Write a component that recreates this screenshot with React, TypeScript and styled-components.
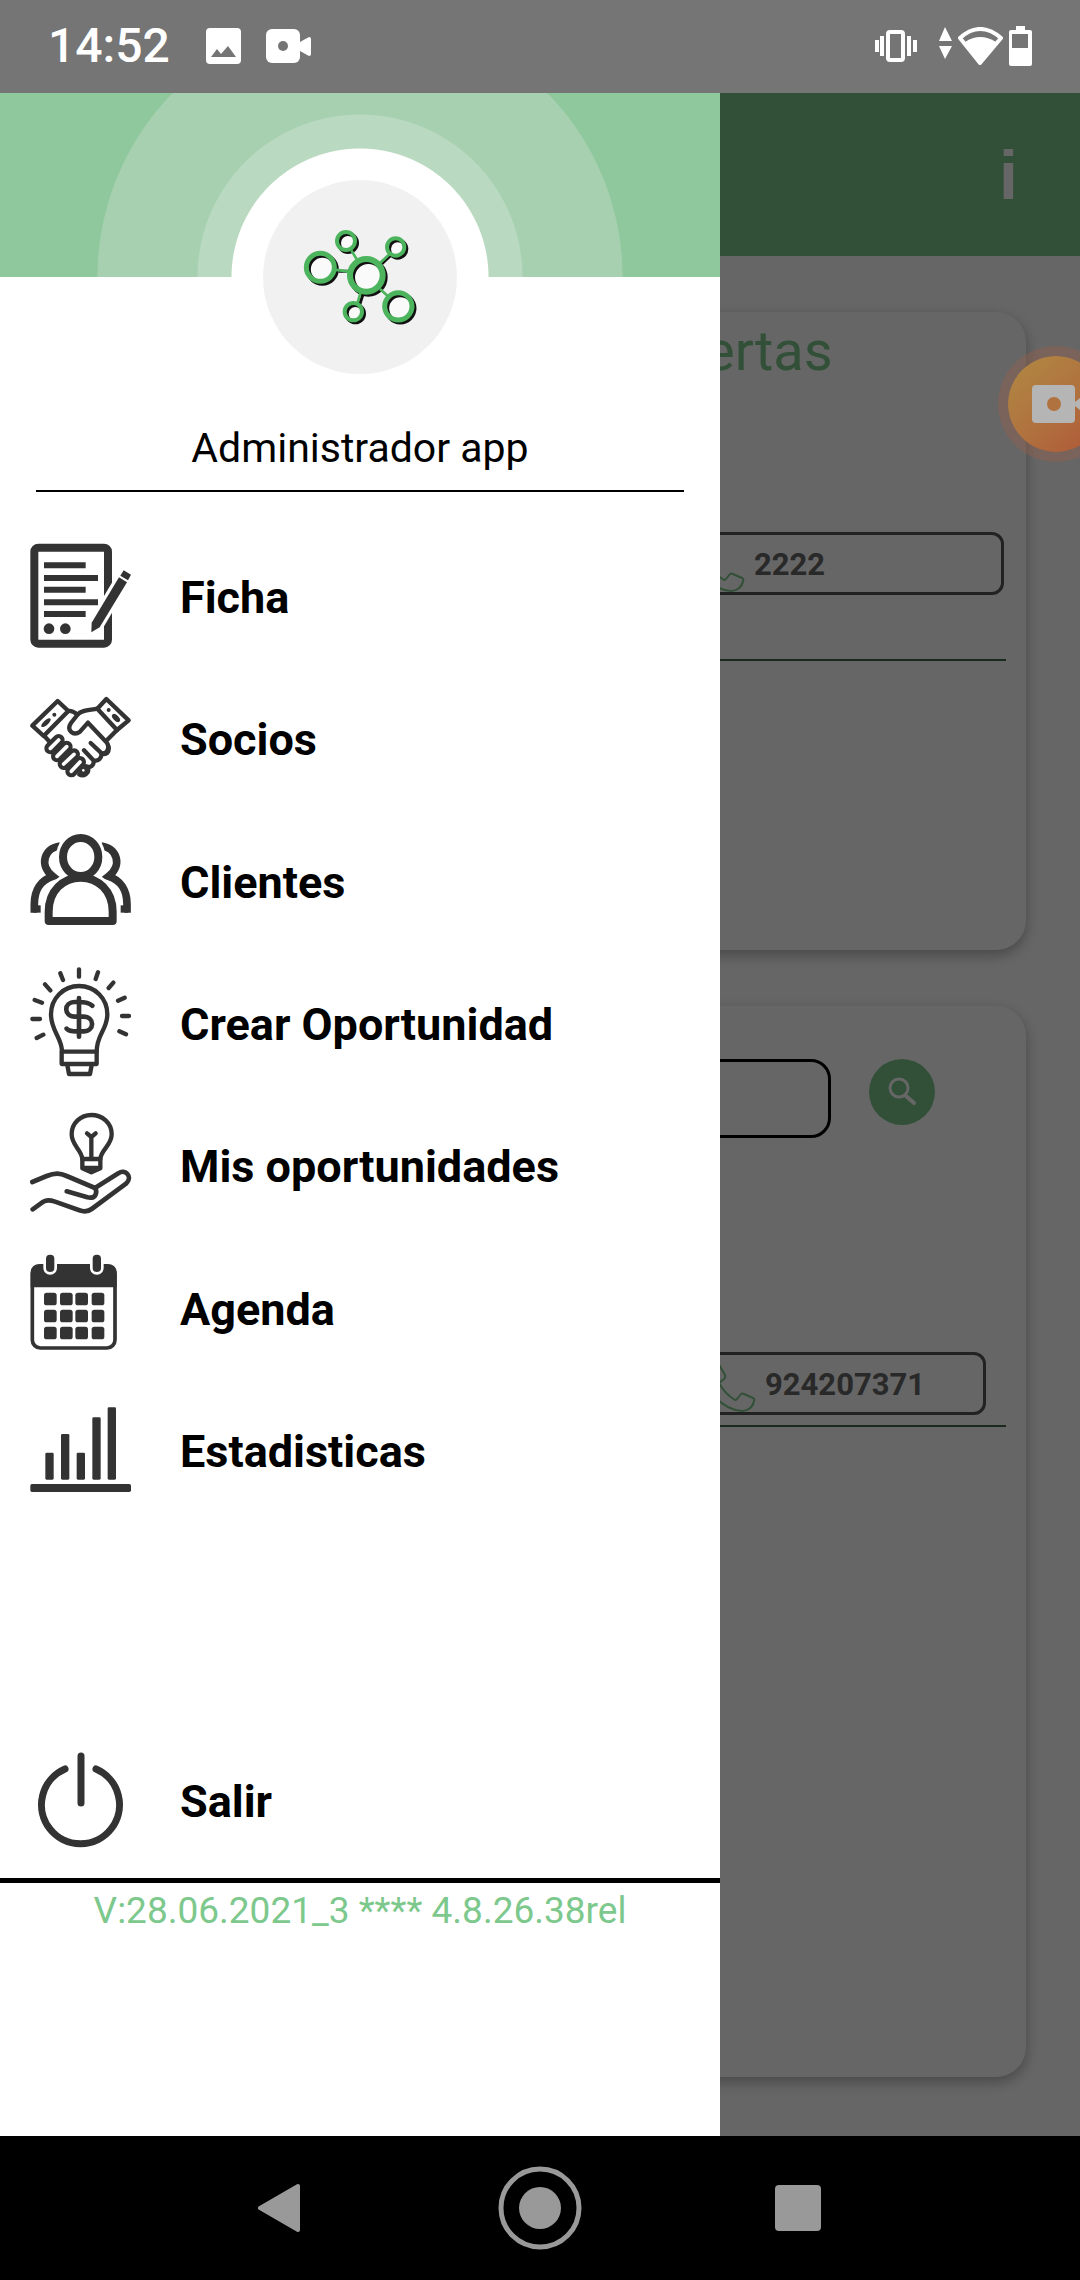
import React from "react";
import styled, { createGlobalStyle } from "styled-components";

const ink = "#333333";
const green = "#7dc88c";

const GlobalStyle = createGlobalStyle`
  *, *::before, *::after { box-sizing: border-box; }
  body { margin: 0; background: #ffffff; }
  body, button, input { font-family: Roboto, "Noto Sans", sans-serif; }
`;

const Screen = styled.div`
  display: flex;
  flex-direction: column;
  min-height: 100vh;
  overflow: hidden;
`;

/* ---------- system bars ---------- */

const StatusBar = styled.header`
  display: flex;
  align-items: center;
  height: 93px;
  padding: 0 48px 2px;
  background: #757575;
  color: #ffffff;
`;

const Clock = styled.time`
  margin-right: 36px;
  font-size: 48px;
  font-weight: 500;
  line-height: 56px;
`;

const StatusGroup = styled.div<{ $gap: number; $end?: boolean }>`
  display: flex;
  align-items: center;
  gap: ${(p) => p.$gap}px;
  margin-left: ${(p) => (p.$end ? "auto" : "0")};
`;

const NavBar = styled.footer`
  display: flex;
  justify-content: center;
  height: 144px;
  background: #000000;
`;

const NavButton = styled.button`
  display: grid;
  place-items: center;
  flex: 0 1 258px;
  padding: 0;
  border: 0;
  background: transparent;
`;

/* ---------- page under the drawer ---------- */

const Stage = styled.main`
  position: relative;
  display: flex;
  flex: 1;
  flex-direction: column;
  overflow: hidden;
  background: #ffffff;
`;

const AppBar = styled.div`
  display: flex;
  align-items: center;
  justify-content: flex-end;
  height: 163px;
  padding: 0 62px;
  background: ${green};
`;

const InfoButton = styled.button`
  padding: 0;
  border: 0;
  background: transparent;
  color: #ffffff;
  font-family: "Liberation Sans", Arial, sans-serif;
  font-size: 68px;
  font-weight: 700;
  line-height: 76px;
`;

const Cards = styled.div`
  display: flex;
  flex: 1;
  flex-direction: column;
  gap: 56px;
  padding: 56px 54px 59px;
`;

const Card = styled.section<{ $grow?: boolean }>`
  flex: ${(p) => (p.$grow ? "1" : "none")};
  min-height: 638px;
  padding: 6px 20px;
  border-radius: 30px;
  background: #ffffff;
  box-shadow: 0 5px 14px rgba(0, 0, 0, 0.3);
`;

const CardTitle = styled.h2`
  margin: 0;
  color: ${green};
  font-size: 56px;
  font-weight: 400;
  line-height: 66px;
  text-align: center;
`;

const ContactRow = styled.div<{ $top: number; $inset: number; $bottom: number }>`
  display: flex;
  justify-content: flex-end;
  padding: ${(p) => p.$top}px ${(p) => p.$inset}px ${(p) => p.$bottom}px;
  border-bottom: 2px solid #40684b;
`;

const PhoneLink = styled.a<{ $wide?: boolean }>`
  display: flex;
  align-items: center;
  gap: 8px;
  width: ${(p) => (p.$wide ? 324 : 295)}px;
  height: 63px;
  padding: 2px 7px 0;
  border: 3px solid #555555;
  border-radius: 12px;
  color: #666666;
  font-size: 31px;
  font-weight: 700;
  line-height: 38px;
  text-decoration: none;

  svg { flex: none; }
`;

const SearchRow = styled.form`
  display: flex;
  align-items: flex-start;
  gap: 38px;
  padding: 47px 71px 0;
`;

const SearchInput = styled.input`
  flex: 1;
  min-width: 0;
  height: 79px;
  padding: 0 20px;
  border: 3px solid #000000;
  border-radius: 20px;
  background: transparent;
  font-size: 31px;
`;

const SearchButton = styled.button`
  display: grid;
  place-items: center;
  width: 66px;
  height: 66px;
  padding: 0;
  border: 0;
  border-radius: 50%;
  background: ${green};
`;

const Scrim = styled.div`
  position: absolute;
  inset: 0;
  background: rgba(0, 0, 0, 0.6);
`;

const RecorderBubble = styled.button`
  position: absolute;
  top: 253px;
  right: -34px;
  width: 116px;
  height: 116px;
  padding: 0;
  border: 10px solid rgba(150, 95, 75, 0.4);
  border-radius: 50%;
  background: linear-gradient(140deg, #b08542 10%, #b0733f 50%, #b05c39 90%) padding-box;

  svg { display: block; }
`;

/* ---------- drawer ---------- */

const Drawer = styled.aside`
  position: absolute;
  top: 0;
  bottom: 0;
  left: 0;
  width: calc(100% * 2 / 3);
  background: #ffffff;
`;

const Hero = styled.div`
  height: 184px;
  background: radial-gradient(
    circle at 50% 100%,
    #ffffff 128px,
    #b9d9c0 129px,
    #b9d9c0 162px,
    #a6d0af 163px,
    #a6d0af 262px,
    #8fc89c 263px
  );
`;

const Avatar = styled.div`
  width: 194px;
  height: 194px;
  margin: -97px auto 0;
  border-radius: 50%;
  background: #f1f1f1;

  svg { display: block; }
`;

const UserName = styled.h1`
  margin: 50px 36px 32px;
  padding-bottom: 18px;
  border-bottom: 2px solid #000000;
  color: #000000;
  font-size: 41px;
  font-weight: 400;
  line-height: 48px;
  text-align: center;
`;

const Menu = styled.ul`
  display: flex;
  flex-direction: column;
  height: 996px;
  margin: 0;
  padding: 0;
  list-style: none;
`;

const MenuEntry = styled.li`
  display: flex;
  flex: 1;
`;

const MenuLink = styled.a`
  display: flex;
  flex: 1;
  align-items: center;
  gap: 48px;
  min-height: 142px;
  padding: 0 30px;
  color: #000000;
  text-decoration: none;
`;

const MenuLabel = styled.span`
  padding-top: 6px;
  font-size: 45px;
  font-weight: 700;
  line-height: 54px;
`;

const ExitArea = styled.div`
  display: flex;
  margin-top: 208px;
  padding-bottom: 8px;
  border-bottom: 5px solid #000000;
`;

const Version = styled.p`
  margin: 0;
  padding-top: 6px;
  color: ${green};
  font-size: 37px;
  line-height: 44px;
  text-align: center;
`;

/* ---------- drawings ---------- */

const MenuIcon = ({ box, children }: { box: string; children: React.ReactNode }) => (
  <svg
    width="102"
    height="110"
    viewBox={box}
    fill="none"
    stroke={ink}
    strokeLinecap="round"
    strokeLinejoin="round"
    aria-hidden="true"
  >
    {children}
  </svg>
);

const FormIcon = () => (
  <MenuIcon box="90 60 306 330">
    <rect x="103" y="83" width="221" height="288" rx="12" strokeWidth="24" />
    <g strokeWidth="18" strokeLinecap="butt">
      <path d="M132 136H257M132 174H294M132 209H257M132 247H294M132 282H257" />
    </g>
    <g fill={ink} stroke="none">
      <circle cx="147" cy="326" r="16" />
      <circle cx="196" cy="326" r="16" />
    </g>
    <path d="M275 310L370 151L392 164L300 320L275 337Z" fill="#fff" stroke="#fff" strokeWidth="20" />
    <path d="M275 308L357 172L381 187L299 322L274 337Z" fill={ink} stroke="none" />
    <path d="M371 151L393 164L384 181L361 167Z" fill={ink} stroke="none" />
  </MenuIcon>
);

const HandshakeIcon = () => (
  <MenuIcon box="90 489 306 330">
    <g strokeWidth="13">
      <path d="M97 620L173 546L205 576L131 651Z" />
      <path d="M319 540L386 604L351 633L292 569Z" />
      <path d="M205 576C216 574 224 580 232 586M134 652L152 672" />
      <path d="M292 569C270 574 245 572 232 588L213 612C198 634 220 652 240 638L264 611L318 668C332 684 322 706 305 703L272 672" />
      <path d="M351 633L322 662M326 684C328 700 320 708 305 704M305 704C304 718 296 728 280 724L252 694M280 724C284 738 272 748 258 742M262 744C272 762 250 774 238 766" />
    </g>
    <g strokeWidth="36">
      <path d="M151 688L176 663M171 712L200 683M191 735L222 706M214 757L240 729" />
    </g>
    <g strokeWidth="11" stroke="#fff">
      <path d="M151 688L176 663M171 712L200 683M191 735L222 706M214 757L240 729" />
    </g>
    <circle cx="250" cy="754" r="9" fill="#fff" strokeWidth="10" />
    <g fill={ink} stroke="none">
      <ellipse cx="138" cy="611" rx="18" ry="7" transform="rotate(-42 138 611)" />
      <circle cx="163" cy="587" r="6" />
      <ellipse cx="348" cy="597" rx="15" ry="8" transform="rotate(45 348 597)" />
      <circle cx="326" cy="573" r="6" />
    </g>
  </MenuIcon>
);

const personBehind = "M180 138C133 144 116 196 158 229C124 240 103 268 103 312V327H111";

const PeopleIcon = () => (
  <MenuIcon box="90 75 306 330">
    <g strokeWidth="23" strokeLinecap="butt" strokeLinejoin="miter">
      <path d={personBehind} />
      <path d={personBehind} transform="translate(484 0) scale(-1 1)" />
    </g>
    <path d="M111 327H111" strokeWidth="22" strokeLinecap="square" />
    <path d="M373 327H373" strokeWidth="22" strokeLinecap="square" />
    <g stroke="#fff" strokeWidth="42">
      <path d="M146 354V335C146 272 190 233 242 233C294 233 338 272 338 335V354" strokeLinecap="butt" />
      <ellipse cx="242" cy="171" rx="53" ry="57" />
    </g>
    <g fill="#fff" strokeWidth="24">
      <path d="M146 363V335C146 272 190 233 242 233C294 233 338 272 338 335V363Z" />
      <ellipse cx="242" cy="171" rx="53" ry="57" />
    </g>
  </MenuIcon>
);

const IdeaMoneyIcon = () => (
  <MenuIcon box="90 501 306 330">
    <g strokeWidth="13">
      <path d="M186 755C186 712 153 694 153 643C153 595 190 558 237 558C285 558 322 595 322 643C322 690 290 702 290 755" />
      <path d="M185 755H290V792H185ZM202 795L207 822H270L275 795" />
      <path d="M277 617C265 606 250 606 237 606H225C190 606 190 650 225 650H250C285 650 285 694 250 694H230C215 694 205 692 200 686M237 594V710" strokeWidth="14" />
      <path d="M237 508V530M181 520L189 540M294 517L287 537M135 553L151 571M340 548L326 564M104 600L126 608M374 593L354 602M97 657H120M366 648H387M110 714L130 704M358 694L378 703" />
    </g>
  </MenuIcon>
);

const IdeaHandIcon = () => (
  <MenuIcon box="90 30 306 330">
    <g strokeWidth="13">
      <path d="M247 180C245 152 215 140 215 106C215 72 242 48 274 48C307 48 335 72 335 106C335 140 303 152 301 180" />
      <path d="M247 180H301V208L274 220L247 208Z" />
      <path d="M252 207H296L274 218Z" fill={ink} />
      <path d="M274 180V114L261 103M274 114L287 103" />
    </g>
    <g strokeWidth="14">
      <path d="M97 249L140 231C165 221 180 222 200 231L285 267L355 223C376 208 400 234 378 254L275 330C262 340 250 338 238 334L165 308C150 303 140 302 130 308L98 331" />
      <path d="M200 277L262 295C285 300 292 286 287 268" />
    </g>
  </MenuIcon>
);

const CalendarIcon = () => (
  <MenuIcon box="90 456 306 330">
    <rect x="97" y="498" width="248" height="246" rx="24" strokeWidth="11" />
    <path d="M92 562V520Q92 492 120 492H322Q350 492 350 520V562Z" fill={ink} stroke="none" />
    <g fill={ink} stroke="#fff" strokeWidth="8">
      <rect x="134" y="460" width="33" height="60" rx="16" />
      <rect x="274" y="460" width="33" height="60" rx="16" />
    </g>
    <g fill={ink} stroke="none">
      {[578, 629, 680].map((y) =>
        [132, 180, 226, 275].map((x) => (
          <rect key={`${x}-${y}`} x={x} y={y} width="38" height="38" rx="8" />
        ))
      )}
    </g>
  </MenuIcon>
);

const ChartIcon = () => (
  <MenuIcon box="90 882 306 330">
    <g fill={ink} stroke="none">
      {[
        [136, 1058],
        [183, 1002],
        [230, 1058],
        [277, 952],
        [323, 922],
      ].map(([x, y]) => (
        <rect key={x} x={x} y={y} width="25" height={1139 - y} rx="4" />
      ))}
      <rect x="91" y="1152" width="302" height="24" rx="5" />
    </g>
  </MenuIcon>
);

const PowerIcon = () => (
  <MenuIcon box="0 0 102 110">
    <path d="M35 25A39 39 0 1 0 66 25" strokeWidth="7" />
    <path d="M51 12V59" strokeWidth="7" />
  </MenuIcon>
);

const nodes = [
  { x: 438, y: 304, r: 27, w: 12 },
  { x: 587, y: 322, r: 26, w: 12 },
  { x: 361, y: 383, r: 42, w: 15 },
  { x: 460, y: 516, r: 26, w: 12 },
  { x: 595, y: 500, r: 41, w: 15 },
  { x: 499, y: 407, r: 49, w: 18 },
];

const NetworkLogo = () => (
  <svg width="194" height="194" viewBox="189 121 582 582" fill="none" aria-hidden="true">
    <g fill="#fafafa">
      {nodes.map((n) => (
        <circle key={n.x} cx={n.x} cy={n.y} r={n.r} />
      ))}
    </g>
    <g stroke="#111111" transform="translate(6 6)">
      <path d="M410 389H440M540 366L566 341M484 455L472 492" strokeWidth="9" />
      {nodes.map((n) => (
        <circle key={n.x} cx={n.x} cy={n.y} r={n.r} strokeWidth={n.w} />
      ))}
    </g>
    <g stroke="#4cb45c">
      <path d="M404 390L446 396M454 332L472 362M540 370L570 342M482 458L472 492M540 448L564 470" strokeWidth="8" />
      {nodes.map((n) => (
        <circle key={n.x} cx={n.x} cy={n.y} r={n.r} strokeWidth={n.w} />
      ))}
    </g>
  </svg>
);

const PhoneIcon = () => (
  <svg width="56" height="56" viewBox="0 0 56 56" fill="none" stroke={green} strokeWidth="2" strokeLinejoin="round" aria-hidden="true">
    <path d="M11 3Q14 1 16 4L24 18Q25 20 23 22L18 26Q24 37 34 43Q35 43 36 42L40 37Q41 36 43 37L52 41Q54 42 53 44C52 50 47 54 41 54C22 53 3 33 2 14Q3 7 11 3Z" />
  </svg>
);

const menu = [
  { label: "Ficha", icon: <FormIcon /> },
  { label: "Socios", icon: <HandshakeIcon /> },
  { label: "Clientes", icon: <PeopleIcon /> },
  { label: "Crear Oportunidad", icon: <IdeaMoneyIcon /> },
  { label: "Mis oportunidades", icon: <IdeaHandIcon /> },
  { label: "Agenda", icon: <CalendarIcon /> },
  { label: "Estadisticas", icon: <ChartIcon /> },
];

export default function App() {
  return (
    <Screen>
      <GlobalStyle />
      <StatusBar>
        <Clock>14:52</Clock>
        <StatusGroup $gap={25}>
          <svg width="35" height="36" viewBox="0 0 35 36" aria-hidden="true">
            <rect x="0" y="0" width="35" height="36" rx="4" fill="#fff" />
            <path d="M5 29L11 21L15 26L22 18L30 29Z" fill="#757575" />
          </svg>
          <svg width="46" height="36" viewBox="0 0 46 36" fill="#fff" aria-hidden="true">
            <rect x="0" y="1" width="34" height="34" rx="6" />
            <path d="M34 14L43 9Q45 9 45 11V26Q45 28 43 28L34 23Z" />
            <circle cx="17" cy="18" r="5" fill="#757575" />
          </svg>
        </StatusGroup>
        <StatusGroup $gap={22} $end>
          <svg width="42" height="32" viewBox="0 0 42 32" fill="#fff" aria-hidden="true">
            <rect x="0" y="10" width="4" height="12" />
            <rect x="5" y="6" width="4" height="20" />
            <rect x="13" y="2" width="15" height="28" rx="2" fill="none" stroke="#fff" strokeWidth="4" />
            <rect x="32" y="6" width="4" height="20" />
            <rect x="38" y="10" width="4" height="12" />
          </svg>
          <StatusGroup $gap={6}>
            <svg width="13" height="38" viewBox="0 0 13 38" fill="#fff" aria-hidden="true">
              <path d="M6 0L13 14H0ZM0 19H13L6 32Z" />
            </svg>
            <svg width="45" height="38" viewBox="0 0 45 38" aria-hidden="true">
              <path d="M2 11Q22 -7 43 11L22 36Z" fill="none" stroke="#fff" strokeWidth="4" strokeLinejoin="round" />
              <path d="M7 15Q22 5 38 15L22 36Z" fill="#fff" />
            </svg>
            <svg width="23" height="40" viewBox="0 0 23 40" fill="#fff" aria-hidden="true">
              <rect x="7" y="0" width="9" height="6" />
              <rect x="0" y="4" width="23" height="36" rx="2" />
              <rect x="3" y="8" width="16" height="14" fill="#757575" />
            </svg>
          </StatusGroup>
        </StatusGroup>
      </StatusBar>

      <Stage>
        <AppBar>
          <InfoButton type="button">i</InfoButton>
        </AppBar>
        <Cards>
          <Card>
            <CardTitle>Oportunidades abiertas</CardTitle>
            <ContactRow $top={148} $inset={2} $bottom={64}>
              <PhoneLink href="tel:2222" $wide>
                <PhoneIcon />
                2222
              </PhoneLink>
            </ContactRow>
          </Card>
          <Card $grow>
            <SearchRow>
              <SearchInput type="search" aria-label="Buscar" />
              <SearchButton type="button" aria-label="Buscar">
                <svg width="32" height="30" viewBox="0 0 32 30" fill="none" stroke="#fff" strokeLinecap="round" aria-hidden="true">
                  <circle cx="13" cy="11" r="9" strokeWidth="3" />
                  <path d="M20 19L28 26" strokeWidth="4" />
                </svg>
              </SearchButton>
            </SearchRow>
            <ContactRow $top={214} $inset={20} $bottom={10}>
              <PhoneLink href="tel:924207371">
                <PhoneIcon />
                924207371
              </PhoneLink>
            </ContactRow>
          </Card>
        </Cards>

        <Scrim />

        <Drawer>
          <Hero />
          <Avatar>
            <NetworkLogo />
          </Avatar>
          <UserName>Administrador app</UserName>
          <nav>
            <Menu>
              {menu.map((item) => (
                <MenuEntry key={item.label}>
                  <MenuLink href="#">
                    {item.icon}
                    <MenuLabel>{item.label}</MenuLabel>
                  </MenuLink>
                </MenuEntry>
              ))}
            </Menu>
            <ExitArea>
              <MenuLink href="#">
                <PowerIcon />
                <MenuLabel>Salir</MenuLabel>
              </MenuLink>
            </ExitArea>
          </nav>
          <Version>V:28.06.2021_3 **** 4.8.26.38rel</Version>
        </Drawer>

        <RecorderBubble type="button" aria-label="Grabar pantalla">
          <svg width="96" height="96" viewBox="10 10 96 96" fill="#b5b5b5" aria-hidden="true">
            <rect x="34" y="39" width="43" height="38" rx="4" />
            <path d="M77 56L92 44V72L77 60Z" />
            <circle cx="56" cy="58" r="7" fill="#b0733f" />
          </svg>
        </RecorderBubble>
      </Stage>

      <NavBar>
        <NavButton type="button" aria-label="Atrás">
          <svg width="48" height="50" viewBox="0 0 48 50" fill="#999" stroke="#999" strokeWidth="4" strokeLinejoin="round" aria-hidden="true">
            <path d="M2 25L40 3V47Z" />
          </svg>
        </NavButton>
        <NavButton type="button" aria-label="Inicio">
          <svg width="84" height="84" viewBox="0 0 84 84" aria-hidden="true">
            <circle cx="42" cy="42" r="39" fill="none" stroke="#999" strokeWidth="5" />
            <circle cx="42" cy="42" r="21" fill="#999" />
          </svg>
        </NavButton>
        <NavButton type="button" aria-label="Recientes">
          <svg width="46" height="46" viewBox="0 0 46 46" fill="#999" aria-hidden="true">
            <rect width="46" height="46" rx="4" />
          </svg>
        </NavButton>
      </NavBar>
    </Screen>
  );
}
